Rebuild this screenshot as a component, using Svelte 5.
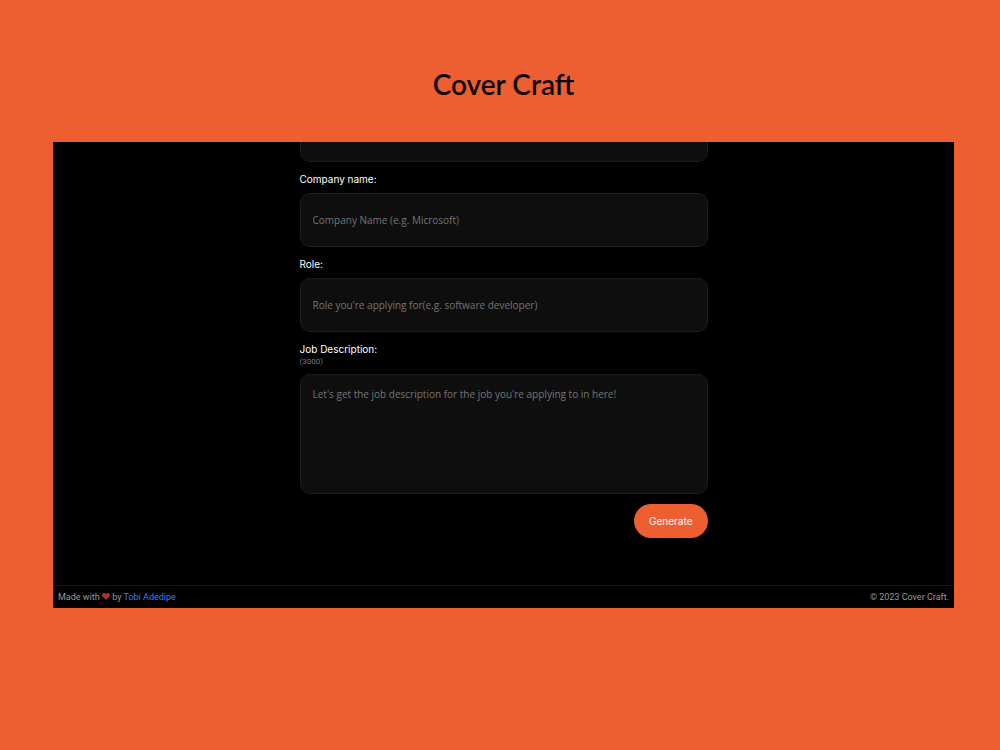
<script lang="ts">
  let previous = $state("");
  let company = $state("");
  let role = $state("");
  let description = $state("");

  const maxLength = 3000;
  let remaining = $derived(maxLength - description.length);
</script>

<div class="page">
  <h1>Cover Craft</h1>

  <div class="window">
    <form onsubmit={(e) => e.preventDefault()}>
      <input
        class="field cut"
        type="text"
        aria-label="Name"
        bind:value={previous}
      />

      <label for="company">Company name:</label>
      <input
        class="field"
        id="company"
        type="text"
        placeholder="Company Name (e.g. Microsoft)"
        bind:value={company}
      />

      <label for="role">Role:</label>
      <input
        class="field"
        id="role"
        type="text"
        placeholder="Role you're applying for(e.g. software developer)"
        bind:value={role}
      />

      <label class="tight" for="description">Job Description:</label>
      <span class="count">({remaining})</span>
      <textarea
        class="field"
        id="description"
        maxlength={maxLength}
        placeholder="Let's get the job description for the job you're applying to in here!"
        bind:value={description}
      ></textarea>

      <button type="submit">Generate</button>
    </form>

    <footer>
      <p>
        Made with
        <svg class="heart" viewBox="0 0 18 16" role="img" aria-label="love">
          <path
            d="M9 16C7 13 0 10 0 4.800C0 2 2 0 4.600 0C6.700 0 8.300 1.200 9 3C9.700 1.200 11.300 0 13.400 0C16 0 18 2 18 4.800C18 10 11 13 9 16Z"
          />
        </svg>
        by <a href="#tobi">Tobi Adedipe</a>
      </p>
      <p>© 2023 Cover Craft.</p>
    </footer>
  </div>
</div>

<style>
  :global(body) {
    margin: 0;
    background: #ed5f30;
  }

  .page {
    padding: 64px 46px 64px 53px;
    font-family: Inter, "Liberation Sans", sans-serif;
  }

  h1 {
    margin: 0 0 38px;
    font-family: Lato, sans-serif;
    font-size: 28px;
    font-weight: 600;
    line-height: 40px;
    text-align: center;
    color: #0c0402;
  }

  .window {
    background: #000;
    color: #fff;
  }

  form {
    display: flex;
    flex-direction: column;
    width: 408px;
    max-width: 100%;
    margin: 0 auto;
    padding-bottom: 47px;
  }

  label {
    padding: 10px 0 7px;
    font-size: 10px;
    line-height: 14px;
  }

  .tight {
    padding-bottom: 0;
  }

  .count {
    padding-bottom: 7px;
    font-family: Roboto, sans-serif;
    font-size: 8px;
    line-height: 11px;
    color: #777;
  }

  .field {
    box-sizing: border-box;
    width: 100%;
    height: 54px;
    margin: 0;
    padding: 0 12px;
    border: 1px solid #1d1d1d;
    border-radius: 10px;
    background: #0e0e0e;
    color: #fff;
    font-family: "Open Sans", sans-serif;
    font-size: 10px;
    line-height: 14px;
    outline: none;
  }

  .field::placeholder {
    color: #757575;
    opacity: 1;
  }

  .cut {
    height: 20px;
    border-top: none;
    border-radius: 0 0 10px 10px;
  }

  textarea.field {
    display: block;
    height: 120px;
    padding: 12px;
    resize: none;
  }

  button {
    align-self: flex-end;
    margin-top: 10px;
    padding: 10px 15px;
    border: none;
    border-radius: 17px;
    background: #ed5f30;
    color: #fff;
    font-family: inherit;
    font-size: 10px;
    line-height: 14px;
    cursor: pointer;
  }

  footer {
    display: flex;
    justify-content: space-between;
    padding: 4px 5px;
    border-top: 1px solid #171717;
    font-family: Roboto, sans-serif;
    font-size: 9px;
    line-height: 14px;
    color: #999;
  }

  footer p {
    margin: 0;
  }

  .heart {
    width: 8px;
    height: 7px;
    fill: #b5302b;
  }

  a {
    color: #3f7cf0;
    text-decoration: none;
  }
</style>
